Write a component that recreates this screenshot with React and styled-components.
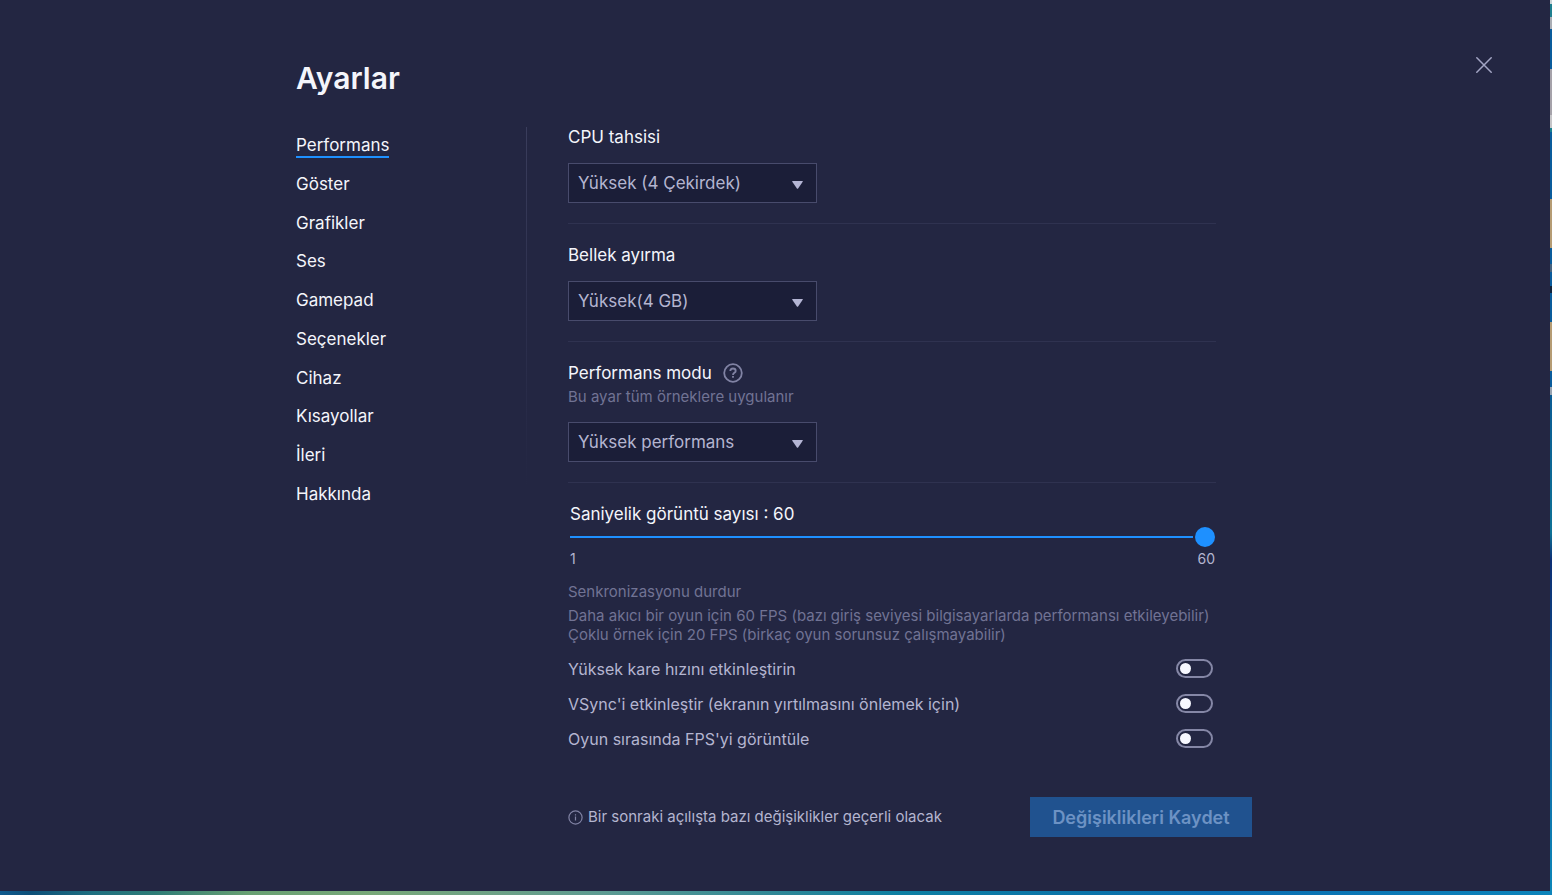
import React, { useState } from "react";
import styled, { createGlobalStyle } from "styled-components";

const colors = {
  page: "#232642",
  field: "#1b1e38",
  line: "#2f3250",
  border: "#484b6c",
  text: "#f4f5fb",
  soft: "#b4b5d0",
  dim: "#717394",
  accent: "#1e90ff",
};

const GlobalStyle = createGlobalStyle`
  *, *::before, *::after { box-sizing: border-box; }
  body {
    margin: 0;
    background: ${colors.page};
    color: ${colors.text};
    font-family: Inter, Roboto, "Liberation Sans", sans-serif;
  }
  button, input, select { font-family: inherit; }
`;

const Desktop = styled.div`
  display: grid;
  grid-template-columns: minmax(0, 1fr) 2px;
  grid-template-rows: 1fr 4px;
  min-height: 100vh;
`;

const SideStrip = styled.div`
  background: linear-gradient(
    to bottom,
    #c9d3d6 0 4px, #1f7f8f 4px 17px, #a9adb4 17px 29px, #0a5c9c 29px 69px,
    #a5a2aa 69px 115px, #c5c5c8 115px 128px, #19808f 128px 132px, #0a5c9c 132px 199px,
    #b59c74 199px 248px, #0a5c9c 248px 264px, #47637f 264px 272px, #0a5c9c 272px 286px,
    #12243c 286px 293px, #0a5c9c 293px 322px, #b59c74 322px 371px, #0a5c9c 371px 387px,
    #98a3b0 387px 395px, #0b5c94 395px, #0f7296 533px, #0d2f74 560px, #0d3f80 625px, #1268a4 720px, #0d86b8 100%
  );
`;

const BottomStrip = styled.div`
  grid-column: 1 / -1;
  background: linear-gradient(
    to right,
    #105a8e, #0d4f78 2%, #1f6f80 6%, #2e7c76 10%, #68a072 16%, #78a878 24%,
    #6da186 32%, #5c9a92 39%, #2f8796 50%, #0e7fa2 58%, #0b73a8 70%, #0a6cb0 78%, #0d84ba
  );
`;

const Window = styled.main`
  position: relative;
  background: ${colors.page};
  padding: 60px 24px 48px;
`;

const CloseButton = styled.button`
  position: absolute;
  top: 53px;
  right: 54px;
  display: grid;
  place-items: center;
  width: 24px;
  height: 24px;
  padding: 0;
  border: 0;
  background: none;
  color: #a3a5c4;
`;

const Container = styled.div`
  max-width: 958px;
  margin: 0 auto;
`;

const Title = styled.h1`
  margin: 0 0 31px;
  font-size: 30px;
  line-height: 36px;
  font-weight: 600;
`;

const Columns = styled.div`
  display: grid;
  grid-template-columns: 230px minmax(0, 1fr);
`;

const Nav = styled.nav`
  display: grid;
  grid-template-rows: repeat(10, 1fr);
  align-items: center;
  justify-items: start;
  height: 387px;
`;

const NavLink = styled.a`
  border-bottom: 2px solid ${(p) => (p.$active ? colors.accent : "transparent")};
  color: inherit;
  font-size: 17px;
  line-height: 22px;
  text-decoration: none;
`;

const Content = styled.div`
  padding-left: 41px;
  padding-right: 2px;
  border-left: 1px solid;
  border-image: linear-gradient(to bottom, #3a3d5c, #2c2f4d 200px, transparent 364px) 1;
`;

const Form = styled.div`
  max-width: 648px;
`;

const Section = styled.section`
  padding-bottom: 20px;
  margin-bottom: 21px;
  border-bottom: 1px solid ${colors.line};
`;

const LabelRow = styled.div`
  display: flex;
  align-items: center;
  gap: 11px;
  height: 20px;
`;

const Label = styled.label`
  font-size: 17px;
  line-height: 20px;
`;

const HelpButton = styled.button`
  display: grid;
  place-items: center;
  padding: 0;
  border: 0;
  background: none;
  color: #8183a4;
`;

const Hint = styled.p`
  margin: 5px 0 0;
  color: ${colors.dim};
  font-size: 15px;
  line-height: 18px;
`;

const SelectBox = styled.div`
  display: grid;
  width: 249px;
  margin-top: 16px;
  align-items: center;

  > * { grid-area: 1 / 1; }
  > svg { justify-self: end; margin: 3px 14px 0 0; pointer-events: none; }
`;

const Select = styled.select`
  appearance: none;
  width: 100%;
  height: 40px;
  padding: 0 36px 0 9px;
  border: 1px solid ${colors.border};
  border-radius: 0;
  background: ${colors.field};
  color: ${colors.soft};
  font-size: 17px;
`;

const SliderBlock = styled.div`
  padding: 0 1px 0 2px;
`;

const Slider = styled.input`
  appearance: none;
  display: block;
  width: 100%;
  height: 20px;
  margin: 3px 0;
  background: none;

  &::-webkit-slider-runnable-track {
    height: 2px;
    background: linear-gradient(${colors.accent}, ${colors.accent}) no-repeat left / calc(100% - 22px) 2px;
  }
  &::-webkit-slider-thumb {
    appearance: none;
    width: 20px;
    height: 20px;
    margin-top: -9px;
    border-radius: 50%;
    background: ${colors.accent};
  }
`;

const Scale = styled.div`
  display: flex;
  justify-content: space-between;
  color: ${colors.soft};
  font-size: 14px;
  line-height: 18px;
`;

const Notes = styled.div`
  margin-top: 14px;
  color: ${colors.dim};
  font-size: 15px;
  line-height: 19px;

  p { margin: 0; }
  p:first-child { margin-bottom: 5px; }
`;

const Toggles = styled.div`
  margin-top: 7px;
`;

const ToggleRow = styled.label`
  display: flex;
  align-items: center;
  justify-content: space-between;
  height: 35px;
  padding-right: 3px;
  color: ${colors.soft};
  font-size: 16px;
  line-height: 20px;
`;

const Switch = styled.input`
  appearance: none;
  display: flex;
  align-items: center;
  width: 37px;
  height: 19px;
  margin: 0;
  padding: 0 2px;
  border: 2px solid #8587a6;
  border-radius: 10px;

  &::before {
    content: "";
    width: 11px;
    height: 11px;
    border-radius: 50%;
    background: #f7f8ff;
  }
  &:checked { justify-content: flex-end; background: ${colors.accent}; }
`;

const Footer = styled.footer`
  display: flex;
  align-items: center;
  justify-content: space-between;
  margin-top: 41px;
`;

const Notice = styled.p`
  display: flex;
  align-items: center;
  gap: 5px;
  margin: 0;
  color: ${colors.soft};
  font-size: 15px;
  line-height: 20px;

  svg { color: #8183a4; }
`;

const SaveButton = styled.button`
  width: 222px;
  height: 40px;
  padding: 0;
  border: 0;
  background: #20528f;
  color: #6d92c4;
  font-size: 18px;
  font-weight: 600;
`;

const CloseIcon = () => (
  <svg width="16" height="16" viewBox="0 0 16 16" fill="none" stroke="currentColor" strokeWidth="1.5" strokeLinecap="round">
    <path d="M.8.8l14.4 14.4M15.2.8L.8 15.2" />
  </svg>
);

const HelpIcon = () => (
  <svg width="20" height="20" viewBox="0 0 20 20" fill="none" stroke="currentColor" strokeWidth="1.8">
    <circle cx="10" cy="10" r="8.8" />
    <path d="M7.3 8.1c0-1.6 1.2-2.6 2.7-2.6s2.7 1 2.7 2.4c0 2-2.7 1.9-2.7 4" />
    <path d="M10 13v1.8" />
  </svg>
);

const InfoIcon = () => (
  <svg width="15" height="15" viewBox="0 0 15 15" fill="none" stroke="currentColor" strokeWidth="1.2">
    <circle cx="7.5" cy="7.5" r="6.6" />
    <path d="M7.5 6.5v4M7.5 4.2v1.2" />
  </svg>
);

const ArrowIcon = () => (
  <svg width="11" height="8" viewBox="0 0 11 8">
    <path d="M.7 0h9.6q.9 0 .4.8L6.1 7.4q-.6.8-1.2 0L.3.8Q-.2 0 .7 0z" fill="#b4b5d4" />
  </svg>
);

const navItems = [
  "Performans", "Göster", "Grafikler", "Ses", "Gamepad",
  "Seçenekler", "Cihaz", "Kısayollar", "İleri", "Hakkında",
];

const toggles = [
  "Yüksek kare hızını etkinleştirin",
  "VSync'i etkinleştir (ekranın yırtılmasını önlemek için)",
  "Oyun sırasında FPS'yi görüntüle",
];

function SelectSection({ id, label, value, hint, help }) {
  return (
    <Section>
      <LabelRow>
        <Label htmlFor={id}>{label}</Label>
        {help && <HelpButton type="button" aria-label={label}><HelpIcon /></HelpButton>}
      </LabelRow>
      {hint && <Hint>{hint}</Hint>}
      <SelectBox>
        <Select id={id} defaultValue={value}>
          <option>{value}</option>
        </Select>
        <ArrowIcon />
      </SelectBox>
    </Section>
  );
}

export default function App() {
  const [fps, setFps] = useState(60);
  return (
    <>
      <GlobalStyle />
      <Desktop>
        <Window>
          <CloseButton type="button" aria-label="Kapat"><CloseIcon /></CloseButton>
          <Container>
            <Title>Ayarlar</Title>
            <Columns>
              <Nav>
                {navItems.map((item, i) => (
                  <NavLink key={item} href="#" $active={i === 0}>{item}</NavLink>
                ))}
              </Nav>
              <Content>
                <Form>
                  <SelectSection id="cpu" label="CPU tahsisi" value="Yüksek (4 Çekirdek)" />
                  <SelectSection id="memory" label="Bellek ayırma" value="Yüksek(4 GB)" />
                  <SelectSection
                    id="mode"
                    label="Performans modu"
                    value="Yüksek performans"
                    hint="Bu ayar tüm örneklere uygulanır"
                    help
                  />
                  <SliderBlock>
                    <LabelRow>
                      <Label htmlFor="fps">Saniyelik görüntü sayısı : {fps}</Label>
                    </LabelRow>
                    <Slider id="fps" type="range" min="1" max="60" value={fps} onChange={(e) => setFps(e.target.value)} />
                    <Scale><span>1</span><span>60</span></Scale>
                  </SliderBlock>
                  <Notes>
                    <p>Senkronizasyonu durdur</p>
                    <p>Daha akıcı bir oyun için 60 FPS (bazı giriş seviyesi bilgisayarlarda performansı etkileyebilir)</p>
                    <p>Çoklu örnek için 20 FPS (birkaç oyun sorunsuz çalışmayabilir)</p>
                  </Notes>
                  <Toggles>
                    {toggles.map((text) => (
                      <ToggleRow key={text}>
                        {text}
                        <Switch type="checkbox" role="switch" />
                      </ToggleRow>
                    ))}
                  </Toggles>
                </Form>
                <Footer>
                  <Notice><InfoIcon />Bir sonraki açılışta bazı değişiklikler geçerli olacak</Notice>
                  <SaveButton type="button" disabled>Değişiklikleri Kaydet</SaveButton>
                </Footer>
              </Content>
            </Columns>
          </Container>
        </Window>
        <SideStrip />
        <BottomStrip />
      </Desktop>
    </>
  );
}
